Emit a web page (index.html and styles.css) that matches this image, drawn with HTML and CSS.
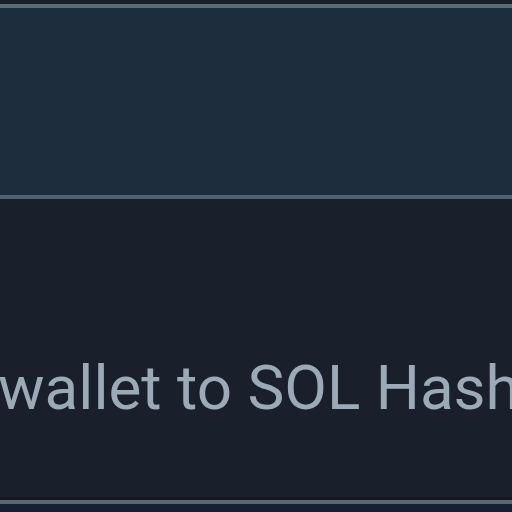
FILE: index.html
```html
<!DOCTYPE html>
<html lang="en">
<head>
    <meta charset="UTF-8">
    <meta name="viewport" content="width=device-width, initial-scale=1.0">
    <title>SOL Hash</title>
    <link rel="stylesheet" href="styles.css">
</head>
<body>
    <div class="top-strip"></div>
    <div class="panel">
        <div class="panel-glow"></div>
    </div>
    <div class="content">
        <p class="connect-text">wallet to SOL Hash</p>
    </div>
    <div class="bottom-strip"></div>
</body>
</html>
```

FILE: styles.css
```css
body {
    margin: 0;
    width: 512px;
    height: 512px;
    overflow: hidden;
    background: #162030;
    font-family: Roboto, "Liberation Sans", Arial, sans-serif;
}

.top-strip {
    height: 4px;
    background: #161f2a;
}

.panel {
    height: 187px;
    background: #1e2d3d;
    border-top: 4px solid #5b6a74;
    border-bottom: 4px solid #4f6070;
}

.panel-glow {
    height: 4px;
    background: #1a2f3c;
}

.content {
    height: 298px;
    background: #1a202b;
    border-bottom: 3px solid #141a24;
    overflow: hidden;
}

.connect-text {
    margin: 152px 0 0 -2px;
    white-space: nowrap;
    font-size: 62px;
    line-height: 74px;
    color: #9ca9b7;
}

.bottom-strip {
    height: 4px;
    background: #5a6670;
}
```
